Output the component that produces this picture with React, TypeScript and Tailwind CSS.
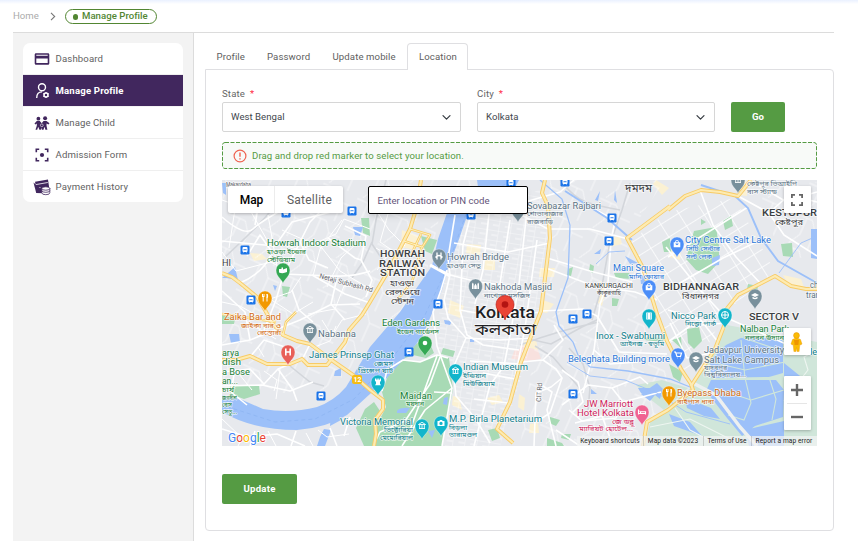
import React from "react";

const sans = "font-[Roboto,'Noto_Sans_Bengali','Noto_Sans',sans-serif]";

type LabelProps = {
  x: number;
  y: number;
  w: number;
  s?: number;
  c?: string;
  bold?: boolean;
  rotate?: number;
  children: string;
};

function Label({ x, y, w, s = 9.8, c = "#5b7384", bold, rotate, children }: LabelProps) {
  return (
    <text
      x={x}
      y={y}
      fontSize={s}
      fill={c}
      fontWeight={bold ? 500 : 400}
      textLength={w}
      lengthAdjust="spacingAndGlyphs"
      stroke="#fff"
      strokeWidth={1.6}
      strokeOpacity={0.7}
      strokeLinejoin="round"
      paintOrder="stroke"
      transform={rotate ? `rotate(${rotate} ${x} ${y})` : undefined}
    >
      {children}
    </text>
  );
}

const glyphs: Record<string, React.ReactNode> = {
  food: <path d="M-2.500-4v3M-1-4v3M-2.500-1.500h1.500M-1.800-1v4.500M2-4v7.500M2-4q1.500 2 0 4" fill="none" stroke="#fff" strokeWidth="1" />,
  museum: <path d="M-3.500-1.500 0-3.700 3.500-1.500zM-3 2.500h6M-2.300-1v3M0-1v3M2.300-1v3" fill="none" stroke="#fff" strokeWidth=".9" />,
  bridge: <path d="M-2-3.500v7M2-3.500v7M-3.500 1.500Q-2-.5 0-.5T3.500 1.500" fill="none" stroke="#fff" strokeWidth="1.300" />,
  mosque: <path d="M-3.500 3v-5l.8-1.500.8 1.500v5zM1.900 3v-5l.8-1.500.8 1.500v5zM-1.300 3v-3l1.300-2.500 1.300 2.500v3z" fill="#fff" />,
  bag: <path fillRule="evenodd" d="M-3.300-1.700h1.500v-.6a1.800 1.800 0 013.600 0v.6h1.500v5h-6.600zM-.9-1.700H.9v-.6a.9.9 0 00-1.800 0zM-1.800-.4q1.800 3.200 3.600 0z" fill="#fff" />,
  cart: <path d="M-4-3h1.500l1.500 4.500h3.500l1-3.500h-5.500M-1 3h.5M2 3h.5" fill="none" stroke="#fff" strokeWidth="1.200" />,
  cap: <path d="M-4-1 0-3 4-1 0 1zM-2.500.8v1.700q2.500 1.500 5 0v-1.700l-2.500 1.200z" fill="#fff" />,
  camera: <path fillRule="evenodd" d="M-3.500-2h1.800l.7-1h2l.7 1h1.800v5h-7zM0-1.200a1.600 1.600 0 100 3.300 1.600 1.600 0 000-3.300" fill="#fff" />,
  castle: <path d="M-3-3.500h1.400v1.300h1v-1.300h1.300v1.300h1v-1.300H3v2.500l-1 .8v2l1 1.500h-6l1-1.500v-2l-1-.8z" fill="#fff" />,
  film: <path fillRule="evenodd" d="M-2.800-3.500h5.600v7h-5.600zM-2-2.600v1h.9v-1zM-2-.5v1h.9v-1zM-2 1.600v1h.9v-1zM1.100-2.600v1H2v-1zM1.100-.5v1H2v-1zM1.100 1.600v1H2v-1z" fill="#fff" />,
  bed: <path d="M-3.500-2.500v5M-3.500 1.500h7v1M3.500 1.500v-1.800h-5v1.800M-2.600-.7h.8" fill="none" stroke="#fff" strokeWidth="1.100" />,
  stadium: <path d="M-4-1h2.500v-1.500h1.500V-.5l4-1.500v4q-4 2-8 .5z" fill="#fff" />,
  hospital: <path d="M-2.200-3.600v7.200M2.200-3.600v7.200M-2.200 0h4.400" fill="none" stroke="#fff" strokeWidth="1.600" />,
  wheel: <path d="M0-3.500a3.500 3.500 0 100 7 3.500 3.500 0 000-7M0-3.500v7M-3.500 0h7" fill="none" stroke="#fff" strokeWidth="1" />,
  dot: <circle r="2.300" fill="#fff" />,
};

function Pin({ x, y, c, g }: { x: number; y: number; c: string; g: string }) {
  return (
    <g transform={`translate(${x} ${y})`}>
      <path d="M0 13.500C-.8 9.500-7 6.900-7 0a7 7 0 0114 0C7 6.900.8 9.500 0 13.500z" fill={c} stroke="#fff" strokeOpacity=".6" strokeWidth=".6" />
      {glyphs[g]}
    </g>
  );
}

function Train({ x, y }: { x: number; y: number }) {
  return (
    <g transform={`translate(${x} ${y})`}>
      <rect x="-4.500" y="-4.500" width="9" height="9" rx="1.200" fill="#1a73e8" />
      <rect x="-2.500" y="-3" width="5" height="5" rx="1" fill="#fff" />
      <path d="M-1.700-1h3.400v1.200h-3.400zM-2 3.300l1-1.300M2 3.300l-1-1.300" fill="#1a73e8" stroke="#fff" strokeWidth=".4" />
    </g>
  );
}

const highways = [
  "M222 273L232 277 240 283 257 297 265 310 272 323 283 335 297 341 310 344 330 359 353 375 370 390 383 400 383 409 375 420 376 434 374 446",
  "M222 360H236L250 356 267 364H290L302 359 308 365H327L335 355 345 342 349 330 362 315 370 302 390 268 410 229 417 206 421 180",
  "M545 180L542 193 548 206 550 238 545 278 541 311 521 362 510 402 497 429 513 443",
  "M670 206L627 238 643 268 653 301 657 314 667 341 681 369 691 384 693 390 668 410 647 422 643 446",
  "M668 210L685 196 701 190 720 192 738 196 751 180",
  "M817 289H806L791 286 775 276 738 295 725 311 726 321 715 349 691 386",
];
const secondary = [
  "M410 229L430 235 421 249 412 282 397 300",
  "M404 241L422 247M397 258L380 285M421 234L411 255",
  "M283 335L286 322 296 312M276 322L222 314",
];

const roads = [
  "M222 217Q245 237 253 229T291 205L342 193M255 225L261 190M222 241L275 246 292 222 331 212",
  "M283 276L310 222 337 195M283 276L276 300 264 330M283 274Q310 275 332 276T370 271",
  "M240 283Q265 272 272 252L260 235 247 256M222 291L245 312 250 340 222 345M250 340L300 320 330 305 360 304",
  "M312 275L345 294 370 303M337 278L331 304 345 320M292 290L299 310 313 322M310 344L301 362",
  "M345 226L366 236 361 260 372 280 366 297M328 238L355 258 361 260M300 242L309 260 328 268",
  "M250 357L264 340 288 348 292 363M222 372L250 369 264 384 278 369 290 364M278 369L293 390 297 401M235 369L231 392 247 405M222 386L262 385 290 391 313 382",
  "M222 429L248 437 277 434 305 446M250 446L255 431M330 428L337 446M350 417L344 436M296 431L291 446",
  "M431 265L450 275 478 282 520 287M447 270L441 290 433 312 437 346 452 388 448 412 442 446",
  "M382 391L387 370 403 360 420 362 437 355 448 358M440 357L430 384 405 421 380 432 373 446M437 356L410 430M434 392L452 393M452 388L425 410 402 446",
  "M455 215L448 258 450 275 444 300 448 318 466 338 453 368 456 396 475 418 490 443",
  "M472 210L463 245 460 310 467 335 483 345 519 350M489 214L483 270 475 304M510 220L499 290",
  "M527 210L519 284 511 330 504 366 490 385 474 446M537 240L525 328 515 378",
  "M466 205L514 211 548 229 590 229 632 240M454 243L508 252 550 243M547 258L590 271 632 282",
  "M460 310L500 317 541 312M466 338L500 340 530 338M470 361L522 364M483 373L515 379M474 399L508 403",
  "M574 180L560 192 525 202M590 207L615 220 611 242 608 282 600 304 594 350 583 393",
  "M546 268L594 286 635 292 657 300M541 311L583 309 597 316 619 352 667 354M594 350L610 364 638 362",
  "M521 362L543 360 556 369 562 378 551 387 536 393 534 446M543 360L563 340 554 325M562 370L578 382 583 402 572 413",
  "M540 384L552 392 547 410 556 446M562 378L550 413 536 422M562 405L588 385 612 388 623 402 616 418 582 421 569 410",
  "M575 423L602 416 613 446M612 388L640 377 648 384M623 402L661 392M556 430L580 446",
  "M666 247L700 290 728 320M668 290L723 258 767 237M668 257L718 226 748 207M700 190L713 225 736 257 762 285",
  "M751 181L785 201 817 192M738 196L769 213 784 235 817 256M769 213L799 186M793 180L805 199 817 202",
  "M668 310L700 319 718 342M670 323L687 358 716 352M668 342L690 326 727 323M727 318L786 344",
];

const minorRoads = [
  "M222 200L250 210 267 240 300 250 336 234 344 219 370 229M248 182L245 202 287 212M282 230L322 248 340 271 370 289",
  "M222 252L236 271 271 262 290 273M222 302L240 306 265 320M270 299L293 314 313 302M301 277L291 292 270 299",
  "M342 220L320 249 313 276M235 209L229 248M268 215L278 272M357 243L341 258 327 287M365 287L344 286 335 309 308 314",
  "M322 320L332 336 342 320 366 314M312 348L330 341 336 326M247 322L276 339M258 347L264 357M239 374L252 390",
  "M264 371L277 380 274 391M280 369L276 399M376 210L389 230 405 246M388 214L380 242 396 253M376 248L388 255 377 270",
  "M222 419L242 438 238 446M268 431L276 446M306 433L313 446M318 430L327 437 349 434",
];

const rail = [
  "M225 257Q260 225 273 208T322 207",
  "M386 180L376 220 372 244 386 265 397 275M372 242L363 262 352 278",
  "M630 183L622 210 609 247 602 286 592 320M560 180Q574 198 586 202T620 210",
  "M520 337L551 344 582 327 599 319M520 345Q560 330 599 322M535 346L553 357 583 392",
  "M290 366L310 382 324 386M569 348L583 364 590 388 588 410",
];

const parks = [
  "M443 348L455 351 453 357 441 354zM417 343L431 346 434 353 426 358 413 355 403 359z",
  "M230 385L259 385 260 394 244 399 230 394z",
  "M282 286L290 287 287 297 283 296zM361 218L369 218 370 236 363 233z",
  "M421 236L437 240 432 254 425 251z",
  "M550 417L560 420 556 426 549 423zM562 434L571 434 569 440 561 438zM547 438L562 443 564 446H547z",
  "M694 231L716 227 719 246 719 262 708 274 696 270 686 259z",
  "M748 284L758 286 757 292 747 289zM701 219L706 222 701 225zM723 221L731 216 733 226 725 230z",
  "M614 273L629 273 632 279 616 278zM669 244L674 242 673 249zM612 298L619 299 617 306 612 306z",
  "M662 242L670 238 671 252 664 252z",
  "M687 329L699 327 702 341 694 349 688 343zM672 340L681 337 682 349z",
  "M647 337L665 338 663 342 644 340zM669 364L683 372 680 382 673 377z",
  "M568 269L573 267 571 276 567 275zM590 264L594 266 593 273 589 271z",
  "M488 430L497 428 500 438 492 441zM222 315L235 319 234 324 222 324z",
  "M781 244L792 243 793 257 783 256z",
];

const ponds = [
  "M222 278L235 267 238 280 226 278z",
  "M229 334L239 334 240 343 231 343z",
  "M335 371L341 368 341 376 334 376z",
  "M331 412L341 420 330 426zM324 429L331 430 325 446H317L320 437z",
  "M397 411Q400 407 410 408L406 413 397 413zM444 398L448 397 447 405 443 404z",
  "M595 200L600 191 598 201zM615 190L617 203 614 200zM594 254L601 249 600 254z",
  "M625 256L638 263 630 264zM640 275L648 275 652 284 641 284z",
  "M712 258L720 255 719 265 712 266zM811 229L817 229V259L811 258z",
  "M638 388L652 388 648 395 641 393zM591 389L597 394 591 394zM657 383L663 389 660 399 655 395 650 401 641 394z",
  "M222 183H226V195L223 193zM273 285L277 286 275 291zM353 227L363 227 360 236 355 235z",
  "M444 320L452 321 450 325 445 324zM470 338L475 338 474 342 470 342zM428 431L435 430 432 438z",
];

const urbanBlocks = [
  "M250 253L262 254 267 259 254 261z", "M450 300L464 306 460 318 448 313z", "M467 244L481 245 480 255 466 253z",
  "M540 268L555 268 554 277 539 277z", "M540 299L554 304 547 313 540 312z", "M402 230L418 236 415 250 401 247z",
  "M524 341L536 339 538 350 523 356z", "M453 396L459 397 462 410 452 405z", "M519 394L525 398 524 411 518 407z",
  "M487 398L499 395 503 402 492 405z", "M656 180L669 188 662 195 653 184z", "M485 260L495 260 495 270 484 270z",
  "M609 238L620 236 622 244 610 247z", "M735 180L746 181 747 196 738 195z", "M783 275L801 279 804 287 788 284z",
  "M600 281L607 285 602 306 598 303z", "M670 248L681 249 680 260 669 257z", "M530 424L538 423 539 433 529 433z",
];

function MapDrawing() {
  const green = "#188038";
  const teal = "#12808c";
  const blue = "#2b77d8";
  const slate = "#5b7384";
  const ink = "#3c4043";
  const orange = "#d36c13";
  const pink = "#d01c5c";
  return (
    <svg viewBox="222 180 595 266" width="595" height="266" className={`block ${sans}`}>
      <defs>
        <pattern id="streetsA" width="12" height="10" patternUnits="userSpaceOnUse" patternTransform="rotate(9)">
          <path d="M0 0H12M0 0V10M6 5H12" stroke="#fff" strokeWidth=".8" strokeOpacity=".85" fill="none" />
        </pattern>
        <pattern id="streetsB" width="21" height="15" patternUnits="userSpaceOnUse" patternTransform="rotate(-32)">
          <path d="M0 0H21M0 0V15" stroke="#fff" strokeWidth="1.500" fill="none" />
        </pattern>
        <pattern id="streetsC" width="37" height="33" patternUnits="userSpaceOnUse" patternTransform="rotate(24)">
          <path d="M0 3H18L25 13H37M12 3V21L5 33M25 13V33" stroke="#fff" strokeWidth=".8" strokeOpacity=".8" fill="none" />
        </pattern>
      </defs>
      <rect x="222" y="180" width="595" height="266" fill="#e7e9ed" />
      <g fill="#fbf1d3">{urbanBlocks.map((d) => <path key={d} d={d} />)}</g>
      <path d="M520 345L538 350 541 359 521 362zM515 349L526 349 523 360 511 359z" fill="#f8e1de" />

      <path d="M222 180H480L440 215 427 270 392 330 356 362 325 395 222 390z" fill="url(#streetsC)" />
      <path d="M455 215L540 190 550 240 541 312 500 446H445L456 390 435 345 445 270z" fill="url(#streetsA)" />
      <path d="M550 180H665L625 240 650 300 665 345 590 350 545 330z" fill="url(#streetsC)" />
      <path d="M535 345L665 350 670 400 640 446H520z" fill="url(#streetsC)" />
      <path d="M667 212L735 198 775 272 725 312 690 380 665 340 630 242z" fill="url(#streetsB)" />
      <path d="M755 182H817V260L780 255z" fill="url(#streetsC)" />

      <path d="M693 386L715 349 727 325 817 342V446H645L650 422z" fill="#d0e6da" />
      <path d="M636 385L662 380 688 388 664 410 650 399z" fill="#cfe5d8" />
      <path d="M403 360L420 362 437 355 449 358 453 389 448 415 442 446H374L378 423 386 407 382 392 390 370z" fill="#a8dab5" />
      <path d="M365 409L374 402 380 411 374 446H364L356 428z" fill="#a8dab5" />
      <g fill="#a8dab5">{parks.map((d) => <path key={d} d={d} />)}</g>

      <path d="M477 180H519L510 197Q480 207 467 216L458 242 448 268 442 290 433 311 422 337 403 360 387 378 370 394 347 415Q326 428 297 430 253 430 222 412V395L240 399 263 409Q290 414 317 407 334 401 346 387L360 364 370 347 400 312 418 286 432 266 438 239 447 213 460 196 478 187z" fill="#9cc0f9" />
      <path d="M505 184L466 214 447 268 425 315 390 361 354 399 315 419 275 422 222 405" fill="none" stroke="#8bb3f1" strokeWidth=".7" strokeDasharray="4 3" />
      <g fill="#9cc0f9">
        {ponds.map((d) => <path key={d} d={d} />)}
        <path d="M726 345L745 336 783 340 783 373 769 377 711 378 710 361zM711 380L776 380 784 390 783 417 755 426 742 436 727 418 706 391zM784 363L805 380 803 399 784 392zM745 430L784 421V446H749zM685 398L711 408 720 419 704 416 687 408zM669 414L690 422 702 436 674 426z" />
      </g>
      <g fill="none" stroke="#d0e6da" strokeWidth="1.100">
        <path d="M711 362L745 370 785 362M741 340L745 378 751 403 744 420 728 415M751 400L784 390M715 388L751 400M769 377L776 399 772 420M741 337L785 352" />
        <path d="M784 401L808 370 804 357 817 350M675 408L690 430 720 446M650 427L690 419 734 441" stroke="#eef6f1" />
      </g>

      <g fill="none" stroke="#d3d6db" strokeWidth="1.600">{rail.map((d) => <path key={d} d={d} />)}</g>
      <g fill="none" stroke="#fff" strokeLinejoin="round">
        <g strokeWidth="1">{minorRoads.map((d) => <path key={d} d={d} />)}</g>
        <g strokeWidth="1.600">{roads.map((d) => <path key={d} d={d} />)}</g>
        <path d="M430 265L450 276" strokeWidth="3" />
        <path d="M693 383L716 395 740 427 757 446" strokeWidth="3.500" stroke="#edf0f0" />
      </g>
      <g fill="none" stroke="#9cc0f9" strokeWidth="1.300">
        <path d="M540 180L562 199 570 225 568 278 556 312 559 326 573 342 578 355 590 367 628 371 670 379 690 387" />
        <path d="M565 191L607 218 632 240M701 185L735 196 748 208 761 238 778 261 817 283" strokeWidth="1.900" />
        <path d="M567 362L590 376 625 380 657 393 686 412 730 424M596 264L609 252 625 251M779 273L801 243 817 236" strokeWidth=".9" />
      </g>
      <g fill="none" strokeLinejoin="round">
        <g stroke="#f8cf6d" strokeWidth="2.600">{secondary.map((d) => <path key={d} d={d} />)}</g>
        <g stroke="#f8cb66" strokeWidth="4">{highways.map((d) => <path key={d} d={d} />)}</g>
        <g stroke="#fdebb2" strokeWidth="2.200">{highways.map((d) => <path key={d} d={d} />)}</g>
        <g stroke="#fff0bd" strokeWidth="1">{secondary.map((d) => <path key={d} d={d} />)}</g>
      </g>
      <rect x="352" y="375" width="10" height="9" rx="2" fill="#f5bc15" />
      <text x="353.500" y="382.300" fontSize="7" fill="#fff" fontWeight="700">12</text>

      <Train x={286} y={213} /><Train x={352} y={211} /><Train x={245} y={250} /><Train x={251} y={300} />
      <Train x={471} y={215} /><Train x={511} y={183} /><Train x={565} y={182} /><Train x={612} y={218} />
      <Train x={609} y={241} /><Train x={438} y={304} /><Train x={409} y={352} /><Train x={321} y={396} />
      <Train x={573} y={319} /><Train x={587} y={314} /><Train x={573} y={394} />

      <Pin x={283} y={270} c="#34a853" g="stadium" />
      <Pin x={265} y={298} c="#f29900" g="food" />
      <Pin x={310} y={330} c="#78909c" g="museum" />
      <Pin x={288} y={352} c="#e85f58" g="hospital" />
      <Pin x={439} y={256} c="#78909c" g="bridge" />
      <Pin x={475.5} y={286} c="#78909c" g="mosque" />
      <Pin x={518} y={209} c="#78909c" g="museum" />
      <Pin x={425} y={343} c="#34a853" g="dot" />
      <Pin x={378} y={382} c="#12b5cb" g="castle" />
      <Pin x={455.500} y={371} c="#12b5cb" g="museum" />
      <Pin x={422} y={426} c="#12b5cb" g="museum" />
      <Pin x={441} y={423} c="#12b5cb" g="camera" />
      <Pin x={738} y={180} c="#78909c" g="museum" />
      <Pin x={677} y={244} c="#4b8df8" g="bag" />
      <Pin x={649} y={287} c="#4b8df8" g="bag" />
      <Pin x={755} y={296} c="#78909c" g="cap" />
      <Pin x={649} y={316} c="#12b5cb" g="film" />
      <Pin x={725} y={315} c="#12b5cb" g="wheel" />
      <Pin x={678} y={355} c="#4b8df8" g="cart" />
      <Pin x={696} y={359} c="#78909c" g="cap" />
      <Pin x={669} y={393} c="#f29900" g="food" />
      <Pin x={642} y={412} c="#f06292" g="bed" />

      <Label x={226} y={187} w={25} s={6.5} c="#5f6368">Makardaha</Label>
      <Label x={267} y={246} w={99} c={green}>Howrah Indoor Stadium</Label>
      <Label x={267} y={254} w={39} s={6.5} c={green}>হাওড়া ইন্ডোর</Label>
      <Label x={267} y={261.5} w={28} s={6.5} c={green}>স্টেডিয়াম</Label>
      <Label x={319} y={278} w={55} s={7} c="#5f6368" rotate={15}>Netaji Subhash Rd</Label>
      <Label x={222} y={266} w={9} s={9} c={ink}>HI</Label>
      <Label x={380} y={257} w={45} s={8.8} c={ink} bold>HOWRAH</Label>
      <Label x={379} y={266.500} w={46} s={8.8} c={ink} bold>RAILWAY</Label>
      <Label x={380} y={276} w={45} s={8.8} c={ink} bold>STATION</Label>
      <Label x={390} y={285.500} w={24} s={8.500} c={ink}>হাওড়া</Label>
      <Label x={385} y={295} w={35} s={8.500} c={ink}>রেলওয়ে</Label>
      <Label x={391} y={304} w={23} s={8.500} c={ink}>স্টেশন</Label>
      <Label x={447} y={260} w={62} c={slate}>Howrah Bridge</Label>
      <Label x={447} y={267.500} w={34} s={6.500} c={slate}>হাওড়া সেতু</Label>
      <Label x={484} y={290} w={68} c={slate}>Nakhoda Masjid</Label>
      <Label x={484} y={297.500} w={46} s={6.500} c={slate}>নাখোদা মসজিদ</Label>
      <Label x={527} y={209} w={74} c={slate}>Sovabazar Rajbari</Label>
      <Label x={527} y={216} w={36} s={6.500} c={slate}>শোভাবাজার</Label>
      <Label x={527} y={223.500} w={26} s={6.500} c={slate}>রাজবাড়ি</Label>
      <Label x={625} y={192} w={27} s={11} c={ink}>দমদম</Label>
      <Label x={747} y={186} w={50} s={7} c={slate}>কেষ্টপুর ভিআইপি</Label>
      <Label x={747} y={193.500} w={30} s={7} c={slate}>বাস স্ট্যান্ড</Label>
      <Label x={762} y={216} w={55} s={8.8} c={ink} bold>KESTOPUR</Label>
      <Label x={775} y={225} w={28} s={8.500} c={ink}>কেষ্টপুর</Label>
      <Label x={685} y={243} w={86} c={blue}>City Centre Salt Lake</Label>
      <Label x={686} y={251} w={34} s={6.800} c={blue}>সিটি সেন্টার</Label>
      <Label x={686} y={258.500} w={26} s={6.800} c={blue}>সল্ট লেক</Label>
      <Label x={613} y={271} w={51} c={blue}>Mani Square</Label>
      <Label x={629} y={278.500} w={35} s={6.500} c={blue}>মানি স্কোয়ার</Label>
      <Label x={585} y={288} w={48} s={6.600} c={ink}>KANKURGACHI</Label>
      <Label x={597} y={294.500} w={24} s={6} c={ink}>কাঁকুরগাছি</Label>
      <Label x={663} y={290} w={76} s={8.8} c={ink} bold>BIDHANNAGAR</Label>
      <Label x={682} y={299} w={37} s={8.500} c={ink}>বিধাননগর</Label>
      <Label x={810} y={288} w={8} c={slate}>ch</Label>
      <Label x={806} y={297.500} w={14} c={slate}>tran</Label>
      <Label x={224} y={320} w={57} c={orange}>Zaika Bar and</Label>
      <Label x={241} y={327.500} w={40} s={6.500} c={orange}>জাইকা বার ও</Label>
      <Label x={257} y={335} w={24} s={6.500} c={orange}>রেস্তোরাঁ</Label>
      <Label x={318} y={337} w={38} c={slate}>Nabanna</Label>
      <Label x={309} y={358} w={85} c={teal}>James Prinsep Ghat</Label>
      <Label x={374} y={365.500} w={19} s={6.500} c={teal}>জেমস</Label>
      <Label x={358} y={373} w={35} s={6.500} c={teal}>প্রিন্সেপ ঘাট</Label>
      <Label x={222} y={356} w={17} c={green}>arya</Label>
      <Label x={222} y={365} w={19} c={green}>dish</Label>
      <Label x={222} y={375} w={28} c={green}>a Bose</Label>
      <Label x={222} y={384} w={16} c={green}>an...</Label>
      <Label x={222} y={392} w={12} s={6.500} c={green}>চার্য</Label>
      <Label x={222} y={399.500} w={15} s={6.500} c={green}>জগদীশ</Label>
      <Label x={222} y={407} w={10} s={6.500} c={green}>বোস</Label>
      <Label x={222} y={414} w={15} s={6.500} c={green}>সেতু...</Label>
      <Label x={382} y={326} w={58} c={green}>Eden Gardens</Label>
      <Label x={397} y={333.500} w={42} s={6.500} c={green}>ইডেন গার্ডেনস</Label>
      <Label x={475} y={318} w={60} s={17} c="#202124" bold>Kolkata</Label>
      <Label x={475} y={335} w={61} s={16} c="#202124">কলকাতা</Label>
      <Label x={463} y={370} w={65} c={teal}>Indian Museum</Label>
      <Label x={463} y={378} w={23} s={6.500} c={teal}>ইন্ডিয়ান</Label>
      <Label x={463} y={385.500} w={32} s={6.500} c={teal}>মিউজিয়াম</Label>
      <Label x={400} y={399} w={32} c={green}>Maidan</Label>
      <Label x={406} y={406} w={18} s={6.500} c={green}>ময়দান</Label>
      <Label x={340} y={425} w={73} c={teal}>Victoria Memorial</Label>
      <Label x={384} y={432} w={29} s={6.500} c={teal}>ভিক্টোরিয়া</Label>
      <Label x={380} y={439.500} w={33} s={6.500} c={teal}>মেমোরিয়াল</Label>
      <Label x={449} y={422} w={93} c={teal}>M.P. Birla Planetarium</Label>
      <Label x={449} y={429.500} w={18} s={6.500} c={teal}>বিড়লা</Label>
      <Label x={449} y={437} w={28} s={6.500} c={teal}>তারামণ্ডল</Label>
      <Label x={541} y={402} w={19} s={7} c="#5f6368" rotate={-86}>CIT Rd</Label>
      <Label x={596} y={339} w={69} c={teal}>Inox - Swabhumi</Label>
      <Label x={620} y={346} w={44} s={6.500} c={teal}>আইনক্স - স্বভূমি</Label>
      <Label x={568} y={362} w={102} c={blue}>Beleghata Building more</Label>
      <Label x={584} y={407} w={49} c={pink}>JW Marriott</Label>
      <Label x={577} y={416} w={57} c={pink}>Hotel Kolkata</Label>
      <Label x={612} y={423.500} w={22} s={6.500} c={pink}>জে ডব্লু</Label>
      <Label x={579} y={431} w={54} s={6.500} c={pink}>ম্যারিয়ট হোটেল...</Label>
      <Label x={671} y={319} w={45} c={teal}>Nicco Park</Label>
      <Label x={685} y={326} w={31} s={6.500} c={teal}>নিক্কো পার্ক</Label>
      <Label x={749} y={320} w={50} s={8.8} c={ink} bold>SECTOR V</Label>
      <Label x={740} y={332} w={49} c={green}>Nalban Park</Label>
      <Label x={745} y={339.500} w={39} s={6.500} c={green}>নলবন উদ্যান</Label>
      <Label x={704} y={353} w={80} c={slate}>Jadavpur University</Label>
      <Label x={704} y={362.500} w={75} c={slate}>Salt Lake Campus</Label>
      <Label x={704} y={370} w={23} s={6.500} c={slate}>যাদবপুর</Label>
      <Label x={704} y={377} w={42} s={6.500} c={slate}>বিশ্ববিদ্যালয়...</Label>
      <Label x={810} y={355} w={7} c={teal}>le</Label>
      <Label x={677} y={396} w={64} c={orange}>Byepass Dhaba</Label>
      <Label x={677} y={403.500} w={37} s={6.800} c={orange}>বাইপাস ধাবা</Label>

      <path d="M505 320C504 314 496 312 496 304.500a9 9 0 0118 0C514 312 506 314 505 320z" fill="#ea4335" stroke="#b31412" strokeWidth=".6" />
      <circle cx="505" cy="304.500" r="3.300" fill="#b31412" />

      <text x="228" y="441.500" textLength="38" lengthAdjust="spacingAndGlyphs" fontSize="13.500" fontWeight="400" stroke="#fff" strokeWidth="1.800" paintOrder="stroke" strokeLinejoin="round">
        <tspan fill="#4285f4">G</tspan><tspan fill="#ea4335">o</tspan><tspan fill="#fbbc04">o</tspan><tspan fill="#4285f4">g</tspan><tspan fill="#34a853">l</tspan><tspan fill="#ea4335">e</tspan>
      </text>
    </svg>
  );
}

function LocationMap() {
  return (
    <div className="relative mt-[11px] h-[266px] w-[595px] overflow-hidden">
      <MapDrawing />
      <div className="absolute left-[6px] top-[6px] flex h-[27px] rounded-[2px] bg-white text-[12px] leading-[28px] shadow-[0_1px_3px_rgba(0,0,0,0.25)]">
        <div className="w-[47px] border-r border-[#ececec] pl-px text-center font-medium text-black">Map</div>
        <div className="w-[68px] pl-px text-center tracking-[0.25px] text-[#5f5f5f]">Satellite</div>
      </div>
      <div className="absolute left-[146px] top-[6px] h-[28px] w-[160px] rounded-[2px] border-[1.5px] border-black bg-white pl-[8.5px] text-[9.6px] leading-[28px] text-[#635478] shadow-md">
        <span className="tracking-[0.03px]">Enter location or PIN code</span>
      </div>
      <div className="absolute left-[562px] top-[6px] flex h-[27px] w-[27px] items-center justify-center rounded-[1px] bg-white pr-px shadow-[0_1px_3px_rgba(0,0,0,0.25)]">
        <svg width="12" height="12" viewBox="0 0 12 12" fill="none" stroke="#666" strokeWidth="1.800">
          <path d="M.9 4V.9H4M8 .9h3.100V4M11.100 8v3.100H8M4 11.100H.9V8" />
        </svg>
      </div>
      <div className="absolute left-[562px] top-[148px] flex h-[27px] w-[27px] items-center justify-center rounded-[1px] bg-white pr-[2px] shadow-[0_1px_3px_rgba(0,0,0,0.25)]">
        <svg width="13" height="20" viewBox="0 0 13 20">
          <path d="M2.500 7.500Q6.500 4.500 10.500 7.500L12 12l-1.500 1-.6-1-.8 7.500H7l-.5-4-.5 4H3.900L3.100 12l-.6 1L1 12z" fill="#fbbc04" stroke="#e8970d" strokeWidth=".4" />
          <path d="M4 8h5l-.6 5H4.600z" fill="#e37400" opacity=".55" />
          <circle cx="6.500" cy="3.500" r="2.900" fill="#fbbc04" stroke="#e8970d" strokeWidth=".6" />
        </svg>
      </div>
      <div className="absolute left-[562px] top-[196px] flex h-[54px] w-[27px] flex-col items-center rounded-[1px] bg-white pr-px shadow-[0_1px_3px_rgba(0,0,0,0.25)]">
        <div className="flex h-[27px] items-center">
          <svg width="12" height="12" viewBox="0 0 12 12"><path d="M6 0v12M0 6h12" stroke="#666" strokeWidth="2.400" /></svg>
        </div>
        <div className="h-px w-5 bg-[#e6e6e6]" />
        <div className="flex h-[26px] items-center">
          <svg width="12" height="12" viewBox="0 0 12 12"><path d="M0 6h12" stroke="#666" strokeWidth="2.400" /></svg>
        </div>
      </div>
      <div className="absolute bottom-0 right-0 flex h-[10px] bg-[#f2f3f3]/75 text-[6.6px] leading-[10px] text-[#222]">
        <span className="w-[66px] text-center tracking-[0.14px]">Keyboard shortcuts</span>
        <span className="w-[60px] border-l border-black/15 pr-px text-center tracking-[0.07px]">Map data ©2023</span>
        <span className="w-[48px] border-l border-black/15 pr-px text-center">Terms of Use</span>
        <span className="w-[66px] border-l border-black/15 pr-px text-center tracking-[0.1px]">Report a map error</span>
      </div>
    </div>
  );
}

const menu: { label: string; track: string; icon: React.ReactNode }[] = [
  {
    label: "Dashboard",
    track: "tracking-[0.14px]",
    icon: <path fillRule="evenodd" d="M2 2.300h12q1.300 0 1.300 1.300v8.800q0 1.300-1.300 1.300H2Q.7 13.700.7 12.400V3.600Q.7 2.300 2 2.300zM2.300 3.700v1h11.400v-1zM2.300 7.600v4.500h11.400V7.600z" fill="currentColor" />,
  },
  {
    label: "Manage Profile",
    track: "font-bold tracking-[0.17px]",
    icon: (
      <g fill="none" stroke="currentColor">
        <circle cx="8" cy="4.300" r="3.500" strokeWidth="1.400" />
        <path d="M2.700 15Q2.700 8.900 8 8.900" strokeWidth="1.400" />
        <circle cx="12" cy="12" r="2" strokeWidth="1.500" />
        <path d="M12 8.900v1.300M12 13.800v1.300M9.300 10.500l1.200.7M13.500 12.900l1.200.7M14.700 10.500l-1.200.7M10.500 12.900l-1.200.7" strokeWidth="1.200" />
      </g>
    ),
  },
  {
    label: "Manage Child",
    track: "tracking-[0.08px]",
    icon: (
      <g fill="currentColor">
        <circle cx="4.400" cy="3.700" r="1.900" /><circle cx="11.100" cy="3.200" r="2" />
        <path d="M.5 8.400L2.800 6h3l1.900 2.300L9.500 6h3l3 2.300-1 1.300-2-1v2.200l.9 3.900h-2l-.9-3-1 3H7.800l-.3-2-.7 2H5.400l-1.200-3-1 3H1.500L2.800 10.700V8.500l-1.400 1z" />
        <circle cx="7.800" cy="10.300" r="1.400" stroke="#fff" strokeWidth=".6" />
      </g>
    ),
  },
  {
    label: "Admission Form",
    track: "tracking-[0.12px]",
    icon: (
      <g>
        <path d="M2.300 5.200V2.300H5.200M10.800 2.300h2.900V5.200M13.700 10.800v2.900H10.800M5.200 13.700H2.300V10.800" fill="none" stroke="currentColor" strokeWidth="1.600" />
        <circle cx="8" cy="8" r="2.100" fill="currentColor" />
      </g>
    ),
  },
  {
    label: "Payment History",
    track: "tracking-[0.15px]",
    icon: (
      <g>
        <path d="M1 2.700L14 .5l1.300 9-12.500 2.500z" fill="currentColor" />
        <path d="M1.300 5.700l12.500-2.200M3.500 9.200l3-.6" stroke="#fff" strokeWidth=".8" />
        <path d="M-.5 3.500l2.700 10.500 7 .3-1-3z" fill="currentColor" />
        <ellipse cx="11.800" cy="9.500" rx="4" ry="1.700" fill="#fff" stroke="currentColor" strokeWidth=".8" />
        <path d="M7.800 9.500v4.300q0 1.900 4 1.900t4-1.900V9.500M7.800 11.600q0 1.700 4 1.700t4-1.700" fill="#fff" stroke="currentColor" strokeWidth=".8" />
        <path d="M7.800 9.500q0 1.700 4 1.700t4-1.700" fill="none" stroke="currentColor" strokeWidth=".8" />
      </g>
    ),
  },
];

function Sidebar() {
  return (
    <aside className="w-[181px] border-r border-[#dcdcdc] bg-[#f3f3f3] pl-[10px] pt-[10px]">
      <nav className="w-[160px] overflow-hidden rounded-[7px] bg-white">
        {menu.map((m, i) => (
          <div
            key={m.label}
            className={`flex h-8 items-center border-b pl-[11px] last:h-[31px] last:border-b-0 ${
              i === 1 ? "border-[#f3f3f3] bg-[#41275e] text-white" : "border-[#efefef] text-[#41275e]"
            }`}
          >
            <svg width="16" height="16" viewBox="0 0 16 16" className="mr-[5.5px] overflow-visible">{m.icon}</svg>
            <span className={`pt-px ${m.track} ${i === 1 ? "text-white" : "text-[#626262]"}`}>{m.label}</span>
          </div>
        ))}
      </nav>
    </aside>
  );
}

function Select({ label, value, width, track }: { label: string; value: string; width: string; track: string }) {
  return (
    <div className={width}>
      <div className="h-[18px] pt-px leading-[17px] tracking-[0.15px] text-[#666]">
        {label}<span className="ml-[5px] text-[#ff2d46]">*</span>
      </div>
      <div className="flex h-[30px] items-center justify-between rounded-[2px] border border-[#d6d6d6] pl-2 pr-[9px] text-[#42484e]">
        <span className={track}>{value}</span>
        <svg width="9" height="7" viewBox="0 0 9 7" fill="none" stroke="#343a40" strokeWidth="1.200" strokeLinecap="round" strokeLinejoin="round"><path d="M1 1.700l3.500 3.500L8 1.700" /></svg>
      </div>
    </div>
  );
}

export default function App() {
  return (
    <div className={`flex h-[541px] w-[858px] flex-col overflow-hidden bg-white text-[9.6px] ${sans}`}>
      <div className="h-1 bg-gradient-to-b from-[#eaf1ff] to-white" />
      <header className="ml-[13px] flex h-[29px] w-[821px] items-start border-b border-[#dcdcdc] pt-[5px]">
        <span className="w-[26px] leading-[14px] text-[#ababab]">Home</span>
        <svg width="6" height="9" viewBox="0 0 6 9" fill="none" stroke="#777" strokeWidth="1.100" className="ml-[11px] mt-[3px]"><path d="M1 .8l3.700 3.700L1 8.200" /></svg>
        <div className="ml-[9px] flex h-[15px] w-[92px] items-center rounded-full border border-[#528632] pl-[7px] font-medium tracking-[0.03px] text-[#528632]">
          <span className="mr-1 h-[6px] w-[5px] rounded-full bg-[#528632]" />Manage Profile
        </div>
      </header>
      <div className="ml-[13px] flex min-h-0 flex-1">
        <Sidebar />
        <main className="ml-[11px] w-[629px] pt-[10px]">
          <div className="flex h-[27px] leading-[27px] tracking-[0.1px] text-[#606060]">
            <span className="w-[51px] pl-[11.5px]">Profile</span>
            <span className="w-[65px] pl-[11px]">Password</span>
            <span className="w-[86px] pl-[11.5px]">Update mobile</span>
            <span className="z-10 h-[27px] w-[61px] rounded-t-[4px] border border-b-0 border-[#dfdfe2] bg-white pl-[11px] leading-[25px]">Location</span>
          </div>
          <section className="-mt-px h-[462px] rounded-[4px] rounded-tl-none border border-[#dfdfe2] px-4">
            <div className="flex gap-4 pt-[14px]">
              <Select label="State" value="West Bengal" width="w-[239px]" track="tracking-[0.03px]" />
              <Select label="City" value="Kolkata" width="w-[238px]" track="tracking-[0.05px]" />
              <button className="mt-[18px] h-[30px] w-[54px] rounded-[2px] bg-[#559b43] font-bold text-white">Go</button>
            </div>
            <div className="relative mt-[10px] flex h-[27px] items-center rounded-[3px] bg-[#f8faf8] pl-[11px] text-[#559b43]">
              <svg width="595" height="27" className="absolute left-0 top-0"><rect x=".5" y=".5" width="594" height="26" rx="2.500" fill="none" stroke="#559b43" strokeDasharray="4 1.500" /></svg>
              <svg width="14" height="14" viewBox="0 0 14 14" fill="none" stroke="#ef6350" strokeWidth="1.200"><circle cx="7" cy="7" r="5.900" /><path d="M7 3.500v4.300M7 9.200v1.400" strokeWidth="1.400" /></svg>
              <span className="ml-[5px] pt-px tracking-[0.09px]">Drag and drop red marker to select your location.</span>
            </div>
            <LocationMap />
            <button className="mt-[28px] h-[30px] w-[75px] rounded-[2px] bg-[#559b43] font-bold tracking-[0.25px] text-white">Update</button>
          </section>
        </main>
      </div>
    </div>
  );
}
